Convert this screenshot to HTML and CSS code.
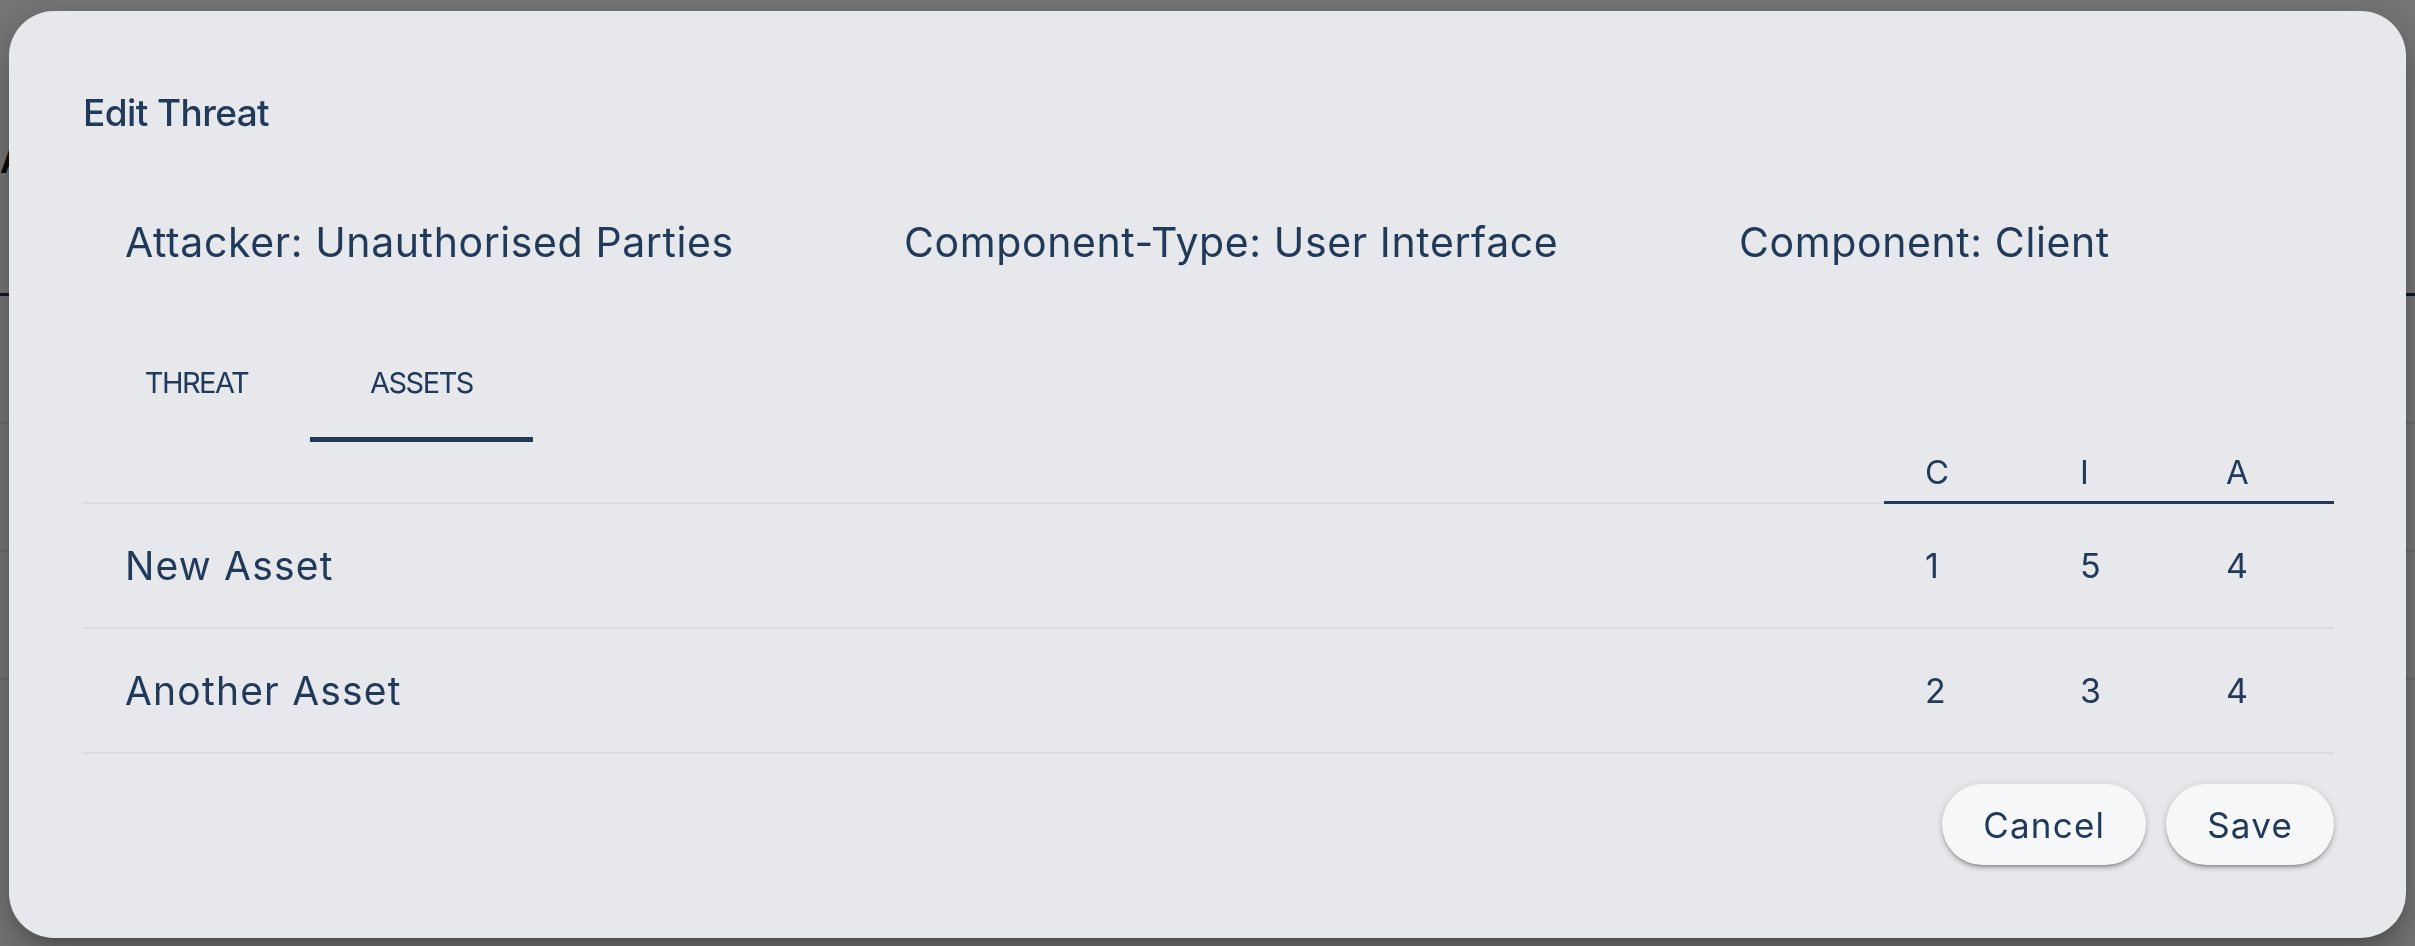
FILE: index.html
```html
<!DOCTYPE html>
<html lang="en">
<head>
<meta charset="utf-8">
<title>Edit Threat</title>
<link rel="stylesheet" href="styles.css">
</head>
<body>
  <div class="page">
    <div class="page-head">
      <h1 class="page-title">Assets</h1>
    </div>
    <div class="page-rule"></div>
    <div class="page-row"></div>
    <div class="page-row"></div>
    <div class="page-row"></div>
    <div class="page-row page-row-last">
      <span class="pc pc-1">1</span>
      <span class="pc pc-2">2</span>
      <span class="pc pc-3">Unauthorised Parties</span>
      <span class="pc pc-4">2</span>
      <span class="pc pc-5">4</span>
    </div>
  </div>

  <div class="backdrop">
    <div class="dialog" role="dialog" aria-labelledby="dlg-title">
      <h2 class="dialog-title" id="dlg-title">Edit Threat</h2>

      <div class="meta">
        <span class="meta-item">Attacker: Unauthorised Parties</span>
        <span class="meta-item">Component-Type: User Interface</span>
        <span class="meta-item">Component: Client</span>
      </div>

      <div class="tabs">
        <button class="tab tab-threat">Threat</button>
        <button class="tab tab-assets active">Assets</button>
      </div>

      <div class="asset-grid">
        <div class="cell head head-name"></div>
        <div class="cell head">C</div>
        <div class="cell head">I</div>
        <div class="cell head">A</div>

        <div class="cell name">New Asset</div>
        <div class="cell num">1</div>
        <div class="cell num">5</div>
        <div class="cell num">4</div>

        <div class="cell name">Another Asset</div>
        <div class="cell num">2</div>
        <div class="cell num">3</div>
        <div class="cell num">4</div>
      </div>

      <div class="actions">
        <button class="btn">Cancel</button>
        <button class="btn">Save</button>
      </div>
    </div>
  </div>
</body>
</html>
```

FILE: styles.css
```css
* {
  box-sizing: border-box;
}

html,
body {
  margin: 0;
  height: 100%;
}

body {
  font-family: Inter, "Noto Sans", sans-serif;
  background: #ececec;
  color: #213a5a;
  overflow: hidden;
}

/* underlying page (dimmed by the backdrop) */
.page {
  color: #111;
}

.page-head {
  height: 293px;
  padding-top: 138px;
}

.page-title {
  margin: 0;
  font-size: 36px;
  font-weight: 600;
  line-height: 44px;
}

.page-rule {
  height: 3px;
  background: #1f2f45;
}

.page-row {
  height: 128px;
  border-bottom: 2px solid #d4d4d4;
}

.page-row-last {
  border-bottom: none;
  display: flex;
  align-items: flex-end;
  height: 274px;
  font-size: 30px;
  line-height: 30px;
}

.pc {
  transform: translateY(24px);
}

.pc-1 { margin-left: 4px; }
.pc-2 { margin-left: 350px; }
.pc-3 { margin-left: 690px; }
.pc-4 { margin-left: 350px; }
.pc-5 { margin-left: 370px; }

/* modal */
.backdrop {
  position: fixed;
  inset: 0;
  background: rgba(0, 0, 0, 0.5);
}

.dialog {
  margin: 11px 9px 8px 9px;
  height: 927px;
  background: #e7e8ec;
  border-radius: 45px;
  padding: 75px 72px 73px 74px;
  display: flex;
  flex-direction: column;
  box-shadow: 0 11px 15px -7px rgba(0, 0, 0, 0.2),
    0 24px 38px 3px rgba(0, 0, 0, 0.14),
    0 9px 46px 8px rgba(0, 0, 0, 0.12);
}

.dialog-title {
  margin: 0;
  font-size: 37px;
  line-height: 54px;
  font-weight: 500;
  letter-spacing: -0.6px;
}

.meta {
  margin-top: 72px;
  height: 60px;
  padding-left: 42px;
  display: grid;
  grid-template-columns: 779px 835px auto;
  align-items: center;
  font-size: 41px;
  line-height: 60px;
  letter-spacing: 0.6px;
}

.tabs {
  margin-top: 50px;
  height: 120px;
  display: flex;
}

.tab {
  height: 120px;
  padding: 5px 0 0;
  border: none;
  background: none;
  font-family: inherit;
  color: inherit;
  font-size: 29px;
  text-transform: uppercase;
  letter-spacing: -1.5px;
  border-bottom: 5px solid transparent;
}

.tab-threat {
  width: 227px;
}

.tab-assets {
  width: 223px;
}

.tab.active {
  border-bottom-color: #213a5a;
}

.asset-grid {
  display: grid;
  grid-template-columns: 1fr 155px 146px 149px;
}

.cell {
  display: flex;
  align-items: center;
  border-bottom: 2px solid #dadcdf;
}

.head {
  height: 62px;
  font-size: 33px;
  padding-left: 41px;
  border-bottom: 3px solid #213a5a;
}

.head-name {
  border-bottom: 2px solid #dadcdf;
}

.name {
  height: 125px;
  padding-left: 42px;
  font-size: 39px;
  letter-spacing: 1.2px;
}

.num {
  height: 125px;
  padding-left: 41px;
  font-size: 34px;
}

.actions {
  margin-top: 30px;
  display: flex;
  justify-content: flex-end;
  gap: 20px;
}

.btn {
  height: 81px;
  padding: 0 41px;
  border: none;
  border-radius: 41px;
  background: #f6f7f9;
  font-family: inherit;
  font-size: 35px;
  letter-spacing: 1.2px;
  color: #213a5a;
  box-shadow: 0 3px 3px -2px rgba(0, 0, 0, 0.3),
    0 3px 4px 0 rgba(0, 0, 0, 0.16),
    0 1px 8px 0 rgba(0, 0, 0, 0.12);
}
```
